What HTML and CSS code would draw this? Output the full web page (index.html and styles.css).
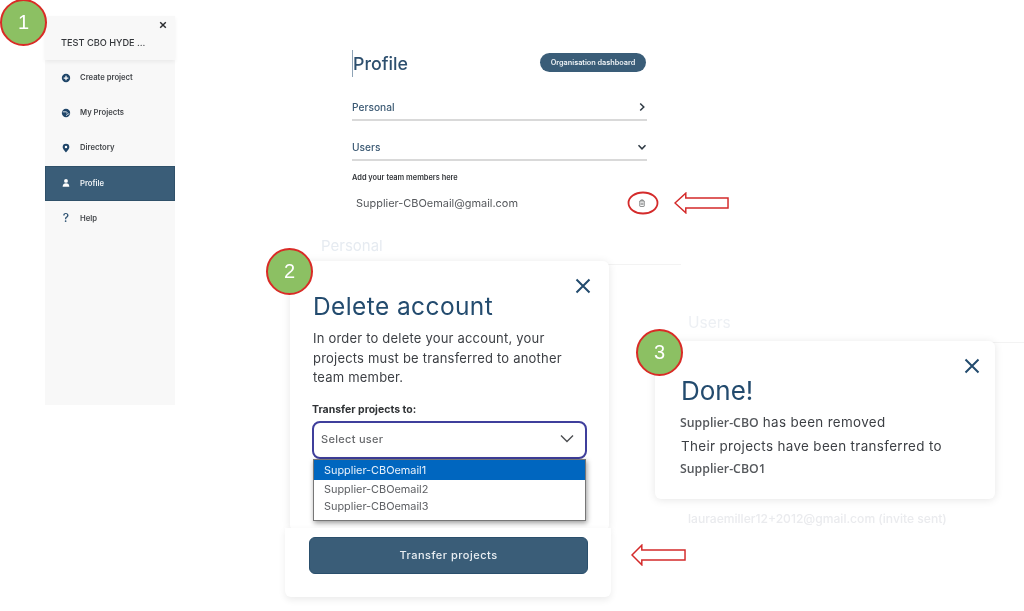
FILE: index.html
```html
<!DOCTYPE html>
<html lang="en">
<head>
<meta charset="utf-8">
<title>Transfer projects guide</title>
<link rel="stylesheet" href="styles.css">
</head>
<body>
<main class="canvas">
  <section class="ghost ghost-personal"><span>Personal</span></section>
  <section class="ghost ghost-users"><span>Users</span></section>
  <p class="ghost-mail">lauraemiller12+2012@gmail.com (invite sent)</p>

  <nav class="sidebar">
    <header class="side-head">
      <span class="side-title">TEST CBO HYDE ...</span>
      <svg class="side-close" viewBox="0 0 10 10"><path d="M1.5 1.5l7 7M8.5 1.5l-7 7"/></svg>
    </header>
    <ul class="side-list">
      <li class="side-item">
        <svg class="side-icon" viewBox="0 0 12 12"><circle cx="6" cy="6" r="5" fill="#1f4568"/><path d="M6 3.2v5.6M3.2 6h5.6" stroke="#fff" stroke-width="1.5"/></svg>
        <span>Create project</span>
      </li>
      <li class="side-item">
        <svg class="side-icon" viewBox="0 0 12 12"><circle cx="6" cy="6" r="5" fill="#1f4568"/><path d="M2 4.6h4.2c1.3 0 1.5 1.4.6 2M6.5 9.4l1.2-1.9 2.3-.6" stroke="#fff" stroke-width="1" fill="none"/></svg>
        <span>My Projects</span>
      </li>
      <li class="side-item">
        <svg class="side-icon" viewBox="0 0 12 12"><path d="M6 .8a4 4 0 0 0-4 4c0 2.8 4 6.6 4 6.6s4-3.8 4-6.6a4 4 0 0 0-4-4z" fill="#1f4568"/><circle cx="6" cy="4.8" r="1.5" fill="#fff"/></svg>
        <span>Directory</span>
      </li>
      <li class="side-item side-active">
        <svg class="side-icon" viewBox="0 0 12 12"><circle cx="6" cy="3.5" r="2.3" fill="#fff"/><path d="M2 10.5c0-3 1.6-4.2 4-4.2s4 1.2 4 4.2z" fill="#fff"/></svg>
        <span>Profile</span>
      </li>
      <li class="side-item">
        <span class="side-icon side-q">?</span>
        <span>Help</span>
      </li>
    </ul>
  </nav>

  <section class="profile">
    <div class="profile-top">
      <h1 class="profile-title">Profile</h1>
      <a class="org-btn">Organisation dashboard</a>
    </div>
    <div class="acc-row acc-personal">
      <span>Personal</span>
      <svg class="acc-icon" viewBox="0 0 10 10"><path d="M3.2 1.5l3.6 3.5-3.6 3.5"/></svg>
    </div>
    <div class="acc-row acc-users">
      <span>Users</span>
      <svg class="acc-icon" viewBox="0 0 10 10"><path d="M1.5 3.2l3.5 3.6 3.5-3.6"/></svg>
    </div>
    <p class="team-label">Add your team members here</p>
    <div class="member">
      <span>Supplier-CBOemail@gmail.com</span>
      <svg class="trash" viewBox="0 0 10 10"><path d="M2.2 2.5h5.6v6.2a.6.6 0 0 1-.6.6H2.8a.6.6 0 0 1-.6-.6zM3.6 2.5V1.2h2.8v1.3M4 4.5v3M6 4.5v3"/></svg>
    </div>
  </section>

  <svg class="mark mark-ellipse" viewBox="0 0 32 24"><ellipse cx="16" cy="12" rx="14.5" ry="10.5"/></svg>
  <svg class="mark mark-arrow-a" viewBox="0 0 56 22"><path d="M1 11L12 1v5h43v10H12v5z"/></svg>
  <svg class="mark mark-arrow-b" viewBox="0 0 56 22"><path d="M1 11L11 1v5h44v10H11v5z"/></svg>

  <section class="dialog dialog-delete">
    <svg class="dialog-close" viewBox="0 0 16 16"><path d="M1.5 1.5l13 13M14.5 1.5l-13 13"/></svg>
    <h2 class="dialog-title">Delete account</h2>
    <p class="dialog-copy">In order to delete your account, your projects must be transferred to another team member.</p>
    <label class="field-label">Transfer projects to:</label>
    <div class="select">
      <span>Select user</span>
      <svg class="select-icon" viewBox="0 0 14 9"><path d="M1 1.5l6 6 6-6"/></svg>
    </div>
    <ul class="options">
      <li class="option option-on">Supplier-CBOemail1</li>
      <li class="option">Supplier-CBOemail2</li>
      <li class="option">Supplier-CBOemail3</li>
    </ul>
  </section>
  <section class="dialog-foot">
    <button class="transfer-btn">Transfer projects</button>
  </section>

  <section class="dialog dialog-done">
    <svg class="dialog-close" viewBox="0 0 16 16"><path d="M1.5 1.5l13 13M14.5 1.5l-13 13"/></svg>
    <h2 class="done-title">Done!</h2>
    <p class="done-line done-first"><span class="sans">Supplier-CBO</span> has been removed</p>
    <p class="done-line done-second">Their projects have been transferred to</p>
    <p class="done-line done-third"><span class="sans">Supplier-CBO1</span></p>
  </section>

  <span class="step step-1">1</span>
  <span class="step step-2">2</span>
  <span class="step step-3">3</span>
</main>
</body>
</html>
```
FILE: styles.css
```css
* { box-sizing: border-box; margin: 0; padding: 0; }
html, body { background: #fff; }
body { font-family: Inter, "Liberation Sans", sans-serif; color: #3c3f44; }
ul { list-style: none; }

/* The reference is an annotated collage: each panel sits freely on the canvas */
.canvas { position: relative; width: 1024px; height: 611px; overflow: hidden; background: #fff; filter: blur(.3px); }

/* Sidebar */
.sidebar { position: absolute; left: 45px; top: 16px; width: 130px; height: 389px; background: #f8f8f8; }
.side-head { position: relative; height: 44px; padding: 14px 0 0 16px; background: #f8f8f8; box-shadow: 0 2px 4px rgba(0,0,0,.06); }
.side-title { font-size: 9.2px; font-weight: 500; color: #33363a; white-space: nowrap; }
.side-close { position: absolute; right: 8px; top: 5px; width: 8px; height: 8px; fill: none; stroke: #2b2d30; stroke-width: 1.8; }
.side-item { display: flex; align-items: center; gap: 9px; height: 35.2px; padding-left: 16px; font-size: 7.7px; font-weight: 600; color: #44474b; }
.side-icon { width: 10px; height: 10px; flex: none; }
.side-active { background: #3a5d78; color: #eef2f5; box-shadow: inset 0 0 0 1px #2f5069; }
.side-q { font-size: 12px; line-height: 10px; font-weight: 500; text-align: center; color: #2d5272; }

/* Profile */
.profile { position: absolute; left: 352px; top: 50px; width: 295px; }
.profile-top { display: flex; justify-content: space-between; align-items: center; height: 27px; }
.profile-title { font-size: 17.8px; font-weight: 500; color: #2d4f6e; border-left: 1px solid #8ea3b6; line-height: 27px; }
.org-btn { width: 106px; height: 19px; margin: -2px 1px 0 0; border-radius: 10px; background: #3a5d78; color: #eef2f5; font-size: 7.3px; font-weight: 600; line-height: 19px; text-align: center; white-space: nowrap; }
.acc-row { display: flex; justify-content: space-between; align-items: center; height: 26px; border-bottom: 2px solid #d9d9d9; font-size: 10.2px; font-weight: 500; color: #3c5a74; }
.acc-personal { margin-top: 18px; }
.acc-users { margin-top: 14px; }
.acc-icon { width: 10px; height: 10px; fill: none; stroke: #2f3a44; stroke-width: 1.5; }
.team-label { margin-top: 12px; font-size: 7.4px; font-weight: 600; color: #34373b; line-height: 10px; }
.member { display: flex; justify-content: space-between; align-items: center; margin-top: 13px; padding-left: 4px; height: 14px; font-size: 10.95px; color: #55585c; }
.trash { width: 8px; height: 8px; margin-right: 1px; fill: none; stroke: #6c6e70; stroke-width: 1; }

/* Ghosted page behind the dialogs */
.ghost { position: absolute; border-bottom: 1px solid #f3f3f3; color: #e6ebf1; font-weight: 400; }
.ghost-personal { left: 321px; top: 236px; width: 360px; height: 29px; font-size: 15px; line-height: 20px; }
.ghost-users { left: 688px; top: 314px; width: 336px; height: 29px; font-size: 15.5px; line-height: 18px; color: #edf0f4; }
.ghost-mail { position: absolute; left: 688px; top: 511px; font-size: 12.1px; font-weight: 500; color: #eaebee; white-space: nowrap; }

/* Red annotation marks */
.mark { position: absolute; fill: none; stroke: #d42a2a; }
.mark-ellipse { left: 627px; top: 191px; width: 32px; height: 24px; stroke-width: 1.8; }
.mark-arrow-a { left: 674px; top: 192px; width: 55px; height: 22px; stroke-width: 1.5; }
.mark-arrow-b { left: 631px; top: 544px; width: 55px; height: 22px; stroke-width: 1.5; }

/* Dialogs */
.dialog { position: absolute; background: #fff; border-radius: 6px; box-shadow: 0 1px 8px rgba(0,0,0,.1); }
.dialog-close { position: absolute; width: 16px; height: 16px; fill: none; stroke: #234b6e; stroke-width: 2; }
.dialog-delete { left: 290px; top: 261px; width: 319px; height: 270px; padding: 31px 22px 0 23px; }
.dialog-delete .dialog-close { right: 18px; top: 17px; }
.dialog-title { font-size: 24.5px; font-weight: 400; line-height: 29px; color: #234b6e; letter-spacing: .4px; }
.dialog-copy { margin-top: 8px; width: 262px; font-size: 13px; line-height: 19.6px; letter-spacing: .2px; color: #3c3f44; }
.field-label { display: block; margin-top: 15px; margin-left: -1px; font-size: 10.5px; font-weight: 700; line-height: 13px; color: #303336; }
.select { display: flex; justify-content: space-between; align-items: center; width: 275px; height: 38px; margin: 5px 0 0 -1px; padding: 0 11px 2px 7px; border: 2px solid #3f3f9c; border-radius: 8px; background: #fff; font-size: 11px; font-weight: 500; letter-spacing: .3px; color: #67696c; }
.select-icon { width: 14px; height: 9px; fill: none; stroke: #4c4e51; stroke-width: 1.4; }
.options { position: relative; width: 273px; height: 62px; background: #fff; border: 1px solid #777; box-shadow: 1px 2px 5px rgba(0,0,0,.4); }
.option { height: 17.5px; padding-left: 10px; font-size: 10.9px; line-height: 17.5px; color: #5e6064; }
.option-on { height: 20px; margin-bottom: 1px; background: #0066bf; color: #e8f1fa; line-height: 21px; }
.dialog-foot { position: absolute; left: 285px; top: 528px; width: 326px; height: 69px; padding: 9px 0 0 24px; background: #fff; border-radius: 0 0 6px 6px; box-shadow: 0 3px 7px rgba(0,0,0,.08); }
.transfer-btn { display: block; width: 279px; height: 37px; padding-bottom: 2px; border: 1px solid #2a4f6c; border-radius: 6px; background: #3a5d78; color: #e9eef2; font: 500 11px Inter, "Liberation Sans", sans-serif; letter-spacing: .5px; }

.dialog-done { left: 655px; top: 341px; width: 340px; height: 158px; padding: 34px 0 0 26px; }
.dialog-done .dialog-close { right: 15px; top: 17px; }
.done-title { font-size: 26px; font-weight: 400; line-height: 31px; color: #234b6e; }
.done-line { font-size: 13.4px; letter-spacing: .35px; color: #3c3f44; line-height: 18px; white-space: nowrap; }
.done-first { margin-top: 7px; margin-left: -1px; }
.done-second { margin-top: 5px; }
.done-third { margin-top: 5px; margin-left: -1px; line-height: 16px; }
.sans { font-family: "Open Sans", "Liberation Sans", sans-serif; font-weight: 600; font-size: 12.3px; letter-spacing: 0; color: #55585c; }

/* Numbered steps */
.step { position: absolute; display: flex; align-items: center; justify-content: center; width: 47px; height: 47px; border: 2px solid #d92b26; border-radius: 50%; background: #8cc063; color: #fff; font-family: "Liberation Sans", sans-serif; font-size: 20px; }
.step-1 { left: 0; top: -1px; }
.step-2 { left: 266px; top: 248px; }
.step-3 { left: 636px; top: 329px; }
```
